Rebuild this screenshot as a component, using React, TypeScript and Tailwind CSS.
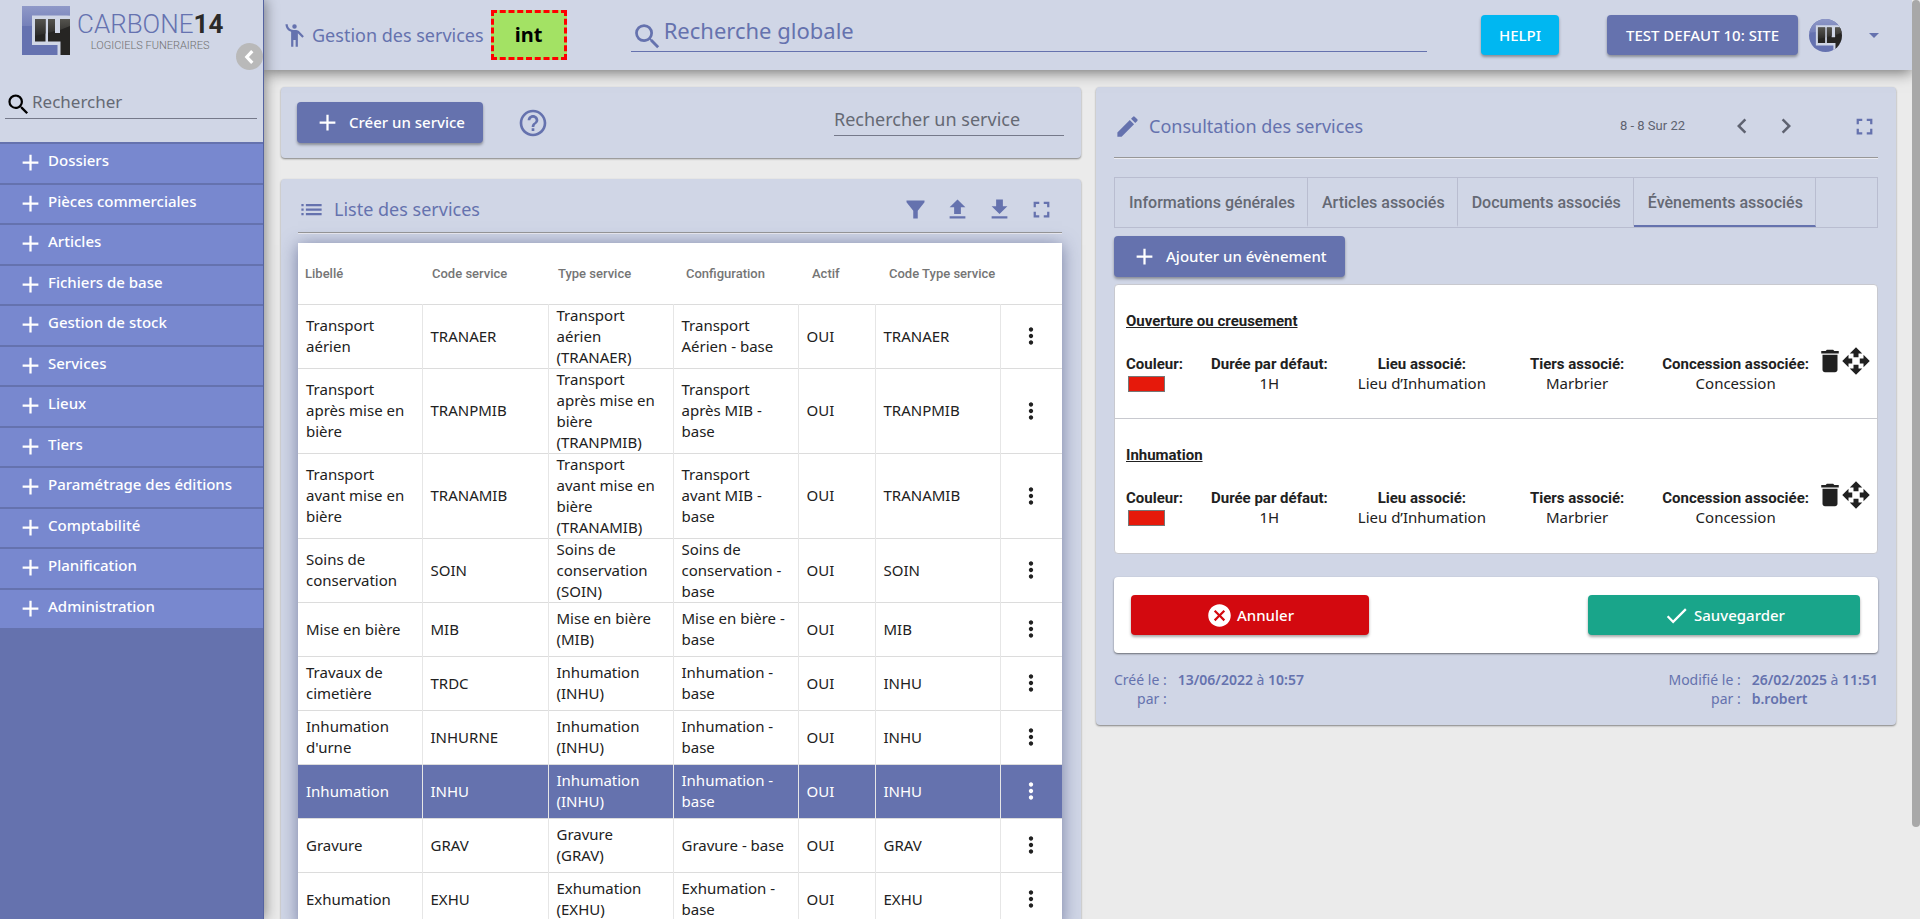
import React from 'react';

const NOTO = "font-['Noto_Sans',sans-serif]";
const ROBOTO = "font-['Roboto',sans-serif]";

const PATHS = {
  search:
    'M15.5 14h-.79l-.28-.27A6.471 6.471 0 0 0 16 9.5 6.5 6.5 0 1 0 9.5 16c1.61 0 3.09-.59 4.23-1.57l.27.28v.79l5 4.99L20.49 19l-4.99-5zm-6 0C7.01 14 5 11.99 5 9.5S7.01 5 9.5 5 14 7.01 14 9.5 11.99 14 9.5 14z',
  person:
    'M12 2a2 2 0 1 0 0 4 2 2 0 0 0 0-4zM15.89 8.11C15.5 7.72 14.83 7 13.53 7h-2.54C8.24 6.99 6 4.75 6 2H4c0 3.16 2.11 5.84 5 6.71V22h2v-6h2v6h2V10.05L18.95 14l1.41-1.41-4.47-4.48z',
  add: 'M19 13h-6v6h-2v-6H5v-2h6V5h2v6h6v2z',
  help: 'M11 18h2v-2h-2v2zm1-16C6.48 2 2 6.48 2 12s4.48 10 10 10 10-4.48 10-10S17.52 2 12 2zm0 18c-4.41 0-8-3.59-8-8s3.59-8 8-8 8 3.59 8 8-3.59 8-8 8zm0-14c-2.21 0-4 1.79-4 4h2c0-1.1.9-2 2-2s2 .9 2 2c0 2-3 1.75-3 5h2c0-2.25 3-2.5 3-5 0-2.21-1.79-4-4-4z',
  list: 'M3 13h2v-2H3v2zm0 4h2v-2H3v2zm0-8h2V7H3v2zm4 4h14v-2H7v2zm0 4h14v-2H7v2zM7 7v2h14V7H7z',
  filter: 'M4 4h16v1.5L14 13v7h-4v-7L4 5.500z',
  upload: 'M5 20h14v-2H5v2zM5 10h4v6h6v-6h4l-7-7-7 7z',
  download: 'M19 9h-4V3H9v6H5l7 7 7-7zM5 18v2h14v-2H5z',
  fullscreen: 'M7 14H5v5h5v-2H7v-3zm-2-4h2V7h3V5H5v5zm12 7h-3v2h5v-5h-2v3zM14 5v2h3v3h2V5h-5z',
  dots: 'M12 8c1.100 0 2-.9 2-2s-.9-2-2-2-2 .9-2 2 .9 2 2 2zm0 2c-1.100 0-2 .9-2 2s.9 2 2 2 2-.9 2-2-.9-2-2-2zm0 6c-1.100 0-2 .9-2 2s.9 2 2 2 2-.9 2-2-.9-2-2-2z',
  edit: 'M3 17.25V21h3.750L17.810 9.940l-3.750-3.750L3 17.250zM20.710 7.040a.996.996 0 0 0 0-1.410l-2.340-2.340a.996.996 0 0 0-1.410 0l-1.830 1.830 3.750 3.750 1.830-1.830z',
  left: 'M15.410 7.410L14 6l-6 6 6 6 1.410-1.410L10.830 12z',
  right: 'M10 6L8.590 7.410 13.170 12l-4.580 4.590L10 18l6-6z',
  trash: 'M6 19c0 1.100.9 2 2 2h8c1.100 0 2-.9 2-2V7H6v12zM19 4h-3.500l-1-1h-5l-1 1H5v2h14V4z',
  move: 'M10 9h4V6h3l-5-5-5 5h3v3zm-1 1H6V7l-5 5 5 5v-3h3v-4zm14 2l-5-5v3h-3v4h3v3l5-5zm-9 3h-4v3H7l5 5 5-5h-3v-3z',
  cancel:
    'M12 2C6.470 2 2 6.470 2 12s4.470 10 10 10 10-4.470 10-10S17.530 2 12 2zm5 13.590L15.590 17 12 13.410 8.410 17 7 15.590 10.590 12 7 8.410 8.410 7 12 10.590 15.590 7 17 8.410 13.410 12 17 15.590z',
  check: 'M9 16.170L4.830 12l-1.420 1.410L9 19 21 7l-1.410-1.410z',
  caret: 'M7 10l5 5 5-5z',
};

function Icon({ name, className = 'size-[27px]' }: { name: keyof typeof PATHS; className?: string }) {
  return (
    <svg viewBox="0 0 24 24" fill="currentColor" aria-hidden="true" className={`shrink-0 ${className}`}>
      <path d={PATHS[name]} />
    </svg>
  );
}

function LogoMark({ className, id }: { className: string; id: string }) {
  return (
    <svg viewBox="0 0 48 49" preserveAspectRatio="xMidYMid slice" aria-hidden="true" className={`shrink-0 ${className}`}>
      <defs>
        <linearGradient id={`${id}-blue`} x1="0" y1="0" x2="0" y2="1">
          <stop offset="0" stopColor="#8f99c8" />
          <stop offset="1" stopColor="#7580b9" />
        </linearGradient>
        <linearGradient id={`${id}-dark`} x1="0" y1="0" x2="0" y2="1">
          <stop offset="0" stopColor="#55544f" />
          <stop offset="1" stopColor="#2b2a28" />
        </linearGradient>
      </defs>
      <path d="M0 0h48v49H0z" fill="#6572b0" />
      <path d="M0 0h48v9C38 11 24 21 0 20z" fill={`url(#${id}-blue)`} />
      <path d="M10 9.500h38V49H35.500V39H10z" fill="#d0d6e6" />
      <path d="M13 13h10.500v22.500H13zM26 13h7v14h5V13h10v36h-9.500V35.500H26z" fill="#262523" />
      <path d="M13 13h10.500v14.500L13 30zM26 13h7v12l-7 2zM38 13h10v7l-10 4z" fill={`url(#${id}-dark)`} />
    </svg>
  );
}

const MENU = [
  'Dossiers',
  'Pièces commerciales',
  'Articles',
  'Fichiers de base',
  'Gestion de stock',
  'Services',
  'Lieux',
  'Tiers',
  'Paramétrage des éditions',
  'Comptabilité',
  'Planification',
  'Administration',
];

function Sidebar() {
  return (
    <aside className="relative z-20 flex w-[264px] shrink-0 flex-col border-r border-[#5563a0] bg-[#6572ae] shadow-[2px_0_12px_rgba(0,0,0,0.4)]">
      <div className="flex h-[142px] shrink-0 flex-col bg-[#d0d6e6]">
        <div className="flex h-[55px] gap-[7px] pt-[6px] pl-[22px]">
          <LogoMark id="brand" className="h-[49px] w-[48px]" />
          <div className={`flex flex-col items-center pt-1 ${ROBOTO}`}>
            <div className="text-[26px] leading-7 font-light whitespace-nowrap text-[#6572b0]">
              CARBONE<span className="font-bold text-[#2b2a28]">14</span>
            </div>
            <div className="text-[11px] leading-4 font-light whitespace-nowrap text-[#6f6f6f]">LOGICIELS FUNERAIRES</div>
          </div>
        </div>
        <div className="mt-[29px] mr-[6px] ml-[5px] flex h-[35px] items-start border-b border-[#75798a] text-black">
          <Icon name="search" className="mt-[7px] size-[27px]" />
          <input
            type="text"
            aria-label="Rechercher"
            placeholder="Rechercher"
            className="h-[34px] min-w-0 flex-1 bg-transparent text-[17px] outline-none placeholder:text-[#656974]"
          />
        </div>
      </div>
      <button
        type="button"
        aria-label="Réduire le menu"
        className="absolute top-[43px] right-0 flex size-[27px] items-center justify-center rounded-full bg-[#b9b9b9] text-white"
      >
        <svg viewBox="0 0 24 24" fill="none" stroke="currentColor" strokeWidth="3.500" aria-hidden="true" className="size-[22px]">
          <path d="M14.500 5.500L8.500 12l6 6.500" />
        </svg>
      </button>
      <nav className="grid h-[486px] shrink-0 auto-rows-fr">
        {MENU.map((item) => (
          <button
            key={item}
            type="button"
            className="flex items-start gap-1 border-t-2 border-[#6572ae] bg-[#7888cf] pl-[17px] text-left text-[15px] font-medium text-white"
          >
            <Icon name="add" className="mt-[5px] size-[27px]" />
            <span className="leading-8">{item}</span>
          </button>
        ))}
      </nav>
    </aside>
  );
}

const BTN = 'flex items-center rounded-[4px] text-[15px] font-medium text-white shadow-[0_2px_3px_rgba(0,0,0,0.35)]';

function Header() {
  return (
    <header className="relative z-10 flex h-[70px] shrink-0 items-center bg-[#d0d6e6] pr-[26px] pl-[17px] text-[#6572ae] shadow-[0_2px_14px_rgba(0,0,0,0.55)]">
      <Icon name="person" />
      <h1 className="ml-1 text-[18px] whitespace-nowrap">Gestion des services</h1>
      <div className="ml-[7px] flex h-[50px] w-[76px] shrink-0 items-center justify-center border-3 border-dashed border-[#ff0000] bg-[#a3e264] text-[20px] font-bold text-black">
        int
      </div>
      <div className="ml-16 flex h-[52px] flex-1 items-start self-start border-b border-[#6572ae] pt-[2px]">
        <Icon name="search" className="mt-[18px] size-[33px]" />
        <input
          type="text"
          aria-label="Recherche globale"
          placeholder="Recherche globale"
          className="mt-3 h-8 min-w-0 flex-1 bg-transparent text-[22px] outline-none placeholder:text-[#6572ae]"
        />
      </div>
      <button type="button" className={`${BTN} ml-[54px] h-10 justify-center bg-[#00b7f1] px-[18px]`}>
        HELPI
      </button>
      <button type="button" className={`${BTN} ml-12 h-10 justify-center bg-[#6572ae] px-[19px] whitespace-nowrap`}>
        TEST DEFAUT 10: SITE
      </button>
      <LogoMark id="avatar" className="ml-[11px] size-[33px] rounded-full" />
      <button type="button" aria-label="Ouvrir le menu du compte" className="ml-5 flex size-6 items-center justify-center">
        <Icon name="caret" className="size-6" />
      </button>
    </header>
  );
}

const CARD = 'rounded-[4px] bg-[#d0d6e6] shadow-[0_1px_2px_rgba(0,0,0,0.45)]';

const COLUMNS = [
  { label: 'Libellé', width: 'w-[124px]', pad: 'pl-[7px]' },
  { label: 'Code service', width: 'w-[126px]', pad: 'pl-[10px]' },
  { label: 'Type service', width: 'w-[125px]', pad: 'pl-[10px]' },
  { label: 'Configuration', width: 'w-[125px]', pad: 'pl-[13px]' },
  { label: 'Actif', width: 'w-[77px]', pad: 'pl-[14px]' },
  { label: 'Code Type service', width: 'w-[125px]', pad: 'pl-[14px]' },
];

const ROWS = [
  ['Transport aérien', 'TRANAER', 'Transport aérien (TRANAER)', 'Transport Aérien - base', 'OUI', 'TRANAER'],
  ['Transport après mise en bière', 'TRANPMIB', 'Transport après mise en bière (TRANPMIB)', 'Transport après MIB - base', 'OUI', 'TRANPMIB'],
  ['Transport avant mise en bière', 'TRANAMIB', 'Transport avant mise en bière (TRANAMIB)', 'Transport avant MIB - base', 'OUI', 'TRANAMIB'],
  ['Soins de conservation', 'SOIN', 'Soins de conservation (SOIN)', 'Soins de conservation - base', 'OUI', 'SOIN'],
  ['Mise en bière', 'MIB', 'Mise en bière (MIB)', 'Mise en bière - base', 'OUI', 'MIB'],
  ['Travaux de cimetière', 'TRDC', 'Inhumation (INHU)', 'Inhumation - base', 'OUI', 'INHU'],
  ["Inhumation d'urne", 'INHURNE', 'Inhumation (INHU)', 'Inhumation - base', 'OUI', 'INHU'],
  ['Inhumation', 'INHU', 'Inhumation (INHU)', 'Inhumation - base', 'OUI', 'INHU'],
  ['Gravure', 'GRAV', 'Gravure (GRAV)', 'Gravure - base', 'OUI', 'GRAV'],
  ['Exhumation', 'EXHU', 'Exhumation (EXHU)', 'Exhumation - base', 'OUI', 'EXHU'],
];
const SELECTED = 7;

function ServiceTable() {
  return (
    <table className="mt-[9px] w-full table-fixed border-collapse bg-white text-[15px] leading-[21px] text-[#212121] shadow-[0_2px_16px_rgba(60,70,120,0.6)]">
      <thead>
        <tr className={`h-[61px] border-b border-[#dcdcdc] text-left text-[13px] text-[#757575] ${ROBOTO}`}>
          {COLUMNS.map((c) => (
            <th key={c.label} scope="col" className={`${c.width} ${c.pad} font-medium whitespace-nowrap`}>
              {c.label}
            </th>
          ))}
          <th scope="col" aria-label="Actions" className="w-[62px]" />
        </tr>
      </thead>
      <tbody>
        {ROWS.map((row, i) => (
          <tr
            key={row[0]}
            className={`h-[54px] border-b border-[#dcdcdc] ${i === SELECTED ? 'bg-[#6572ae] text-white' : ''}`}
          >
            {row.map((cell, j) => (
              <td key={j} className="border-r border-[#e6e6e6] py-0 pr-[10px] pl-2">
                {cell}
              </td>
            ))}
            <td className="p-0">
              <button type="button" aria-label={`Actions ${row[0]}`} className="mx-auto flex">
                <Icon name="dots" className="size-[26px]" />
              </button>
            </td>
          </tr>
        ))}
      </tbody>
    </table>
  );
}

const TOOLS = [
  { icon: 'filter', label: 'Filtrer' },
  { icon: 'upload', label: 'Importer' },
  { icon: 'download', label: 'Exporter' },
  { icon: 'fullscreen', label: 'Plein écran' },
] as const;

function ListColumn() {
  return (
    <div className="flex min-w-0 flex-col gap-[21px]">
      <section className={`${CARD} flex h-[71px] shrink-0 items-center pr-[17px] pl-4`}>
        <button type="button" className={`${BTN} h-[41px] gap-2 bg-[#6572ae] pr-[18px] pl-[17px]`}>
          <Icon name="add" />
          Créer un service
        </button>
        <button type="button" aria-label="Aide" className="ml-[34px] flex text-[#6572ae]">
          <Icon name="help" className="size-8" />
        </button>
        <input
          type="text"
          aria-label="Rechercher un service"
          placeholder="Rechercher un service"
          className="mb-[6px] ml-auto h-[33px] w-[230px] border-b border-[#75798a] bg-transparent text-[18px] outline-none placeholder:text-[#656974]"
        />
      </section>
      <section className={`${CARD} shrink-0 pr-[19px] pb-6 pl-[17px]`}>
        <div className="flex h-[54px] items-center border-b border-[#979797] pt-2 pr-[7px] text-[#6572ae]">
          <Icon name="list" />
          <h2 className="ml-[9px] text-[18px]">Liste des services</h2>
          <div className="ml-auto flex gap-[15px]">
            {TOOLS.map((t) => (
              <button key={t.icon} type="button" aria-label={t.label} className="flex">
                <Icon name={t.icon} />
              </button>
            ))}
          </div>
        </div>
        <div className="h-px bg-[#ececf2]" />
        <ServiceTable />
      </section>
    </div>
  );
}

const TABS = ['Informations générales', 'Articles associés', 'Documents associés', 'Évènements associés'];

const EVENTS = ['Ouverture ou creusement', 'Inhumation'];

function Field({ label, value, className }: { label: string; value: string; className: string }) {
  return (
    <div className={`text-center leading-5 whitespace-nowrap ${className}`}>
      <div className={`h-[19px] font-bold ${ROBOTO}`}>{label}</div>
      <div>{value}</div>
    </div>
  );
}

function EventItem({ title }: { title: string }) {
  return (
    <li className="flex h-[134px] items-start border-b border-[#c8c9cf] pr-[6px] pl-[11px] text-[15px] text-[#212121] last:border-b-0">
      <div className="flex min-w-0 flex-1 flex-col">
        <h3 className={`mt-[26px] leading-5 font-bold underline ${ROBOTO}`}>{title}</h3>
        <div className="mt-[23px] flex items-start">
          <div className="w-[58px] leading-5">
            <div className={`font-bold ${ROBOTO}`}>Couleur:</div>
            <div className="mt-[2px] ml-[2px] h-4 w-[37px] border border-[#767676] bg-[#e6190b]" />
          </div>
          <div className="ml-[27px] flex min-w-0 flex-1 items-start justify-between">
            <Field label="Durée par défaut:" value="1H" className="" />
            <Field label="Lieu associé:" value="Lieu d’Inhumation" className="" />
            <Field label="Tiers associé:" value="Marbrier" className="ml-[14px]" />
            <Field label="Concession associée:" value="Concession" className="ml-2" />
          </div>
        </div>
      </div>
      <div className="mt-[61px] ml-[6px] flex">
        <button type="button" aria-label={`Supprimer ${title}`} className="flex">
          <Icon name="trash" className="size-[30px]" />
        </button>
        <button type="button" aria-label={`Déplacer ${title}`} className="-ml-1 flex">
          <Icon name="move" className="size-[30px]" />
        </button>
      </div>
    </li>
  );
}

function Stamp({ label, date, time, user }: { label: string; date: string; time: string; user: string }) {
  return (
    <dl className="grid grid-cols-[auto_auto] gap-x-[11px] text-[14px] leading-[19px]">
      <dt className="text-right">{label} le :</dt>
      <dd>
        <b className="font-semibold">{date}</b> à <b className="font-semibold">{time}</b>
      </dd>
      <dt className="text-right">par :</dt>
      <dd className="font-semibold">{user}</dd>
    </dl>
  );
}

function DetailCard() {
  return (
    <section className={`${CARD} min-w-0 self-start px-[18px] pb-[17px]`}>
      <div className="flex h-[71px] items-center border-b border-[#979797] pt-[8px] text-[#6572ae]">
        <Icon name="edit" />
        <h2 className="ml-2 text-[18px]">Consultation des services</h2>
        <div className="ml-auto flex items-center text-[#5e6270]">
          <span className={`text-[13px] ${ROBOTO}`}>8 - 8 Sur 22</span>
          <button type="button" aria-label="Précédent" className="ml-[42px] flex">
            <Icon name="left" className="size-[30px]" />
          </button>
          <button type="button" aria-label="Suivant" className="ml-[14px] flex">
            <Icon name="right" className="size-[30px]" />
          </button>
        </div>
        <button type="button" aria-label="Plein écran" className="ml-[50px] flex">
          <Icon name="fullscreen" />
        </button>
      </div>
      <div className="h-px bg-[#ececf2]" />
      <div
        role="tablist"
        className={`mt-[18px] flex h-[51px] border border-[#b9bdd0] text-[16px] font-medium text-[#656974] ${ROBOTO}`}
      >
        {TABS.map((t, i) => (
          <button
            key={t}
            type="button"
            role="tab"
            aria-selected={i === 3}
            className={`border-r border-b-2 border-r-[#b9bdd0] pt-[2px] pr-3 pl-[14px] whitespace-nowrap ${
              i === 3 ? 'border-b-[#6572ae]' : 'border-b-transparent'
            }`}
          >
            {t}
          </button>
        ))}
      </div>
      <button type="button" className={`${BTN} mt-2 h-[41px] gap-2 bg-[#6572ae] pr-[18px] pl-[17px]`}>
        <Icon name="add" />
        Ajouter un évènement
      </button>
      <ul className="mt-[7px] rounded-[4px] border border-[#c8c9cf] bg-white">
        {EVENTS.map((e) => (
          <EventItem key={e} title={e} />
        ))}
      </ul>
      <div className="mt-[23px] flex justify-between rounded-[4px] bg-white py-[18px] pr-[18px] pl-[17px] shadow-[0_1px_2px_rgba(0,0,0,0.5)]">
        <button type="button" className={`${BTN} h-10 w-[238px] justify-center gap-1 bg-[#d3090f]`}>
          <Icon name="cancel" />
          Annuler
        </button>
        <button type="button" className={`${BTN} h-10 w-[272px] justify-center gap-1 bg-[#19a58a]`}>
          <Icon name="check" />
          Sauvegarder
        </button>
      </div>
      <div className="mt-[17px] flex justify-between text-[#6572ae]">
        <Stamp label="Créé" date="13/06/2022" time="10:57" user="" />
        <Stamp label="Modifié" date="26/02/2025" time="11:51" user="b.robert" />
      </div>
    </section>
  );
}

export default function App() {
  return (
    <div className={`relative flex h-screen overflow-hidden bg-[#ebebeb] pr-2 ${NOTO}`}>
      <Sidebar />
      <div className="flex min-w-0 flex-1 flex-col">
        <Header />
        <main className="grid min-h-0 flex-1 grid-cols-2 gap-[15px] pt-[17px] pr-4 pl-[17px]">
          <ListColumn />
          <DetailCard />
        </main>
      </div>
      <div className="absolute inset-y-0 right-0 z-30 w-2 bg-[#ebebeb]">
        <div className="h-[90%] rounded-full bg-[#a8a8a8]" />
      </div>
    </div>
  );
}
